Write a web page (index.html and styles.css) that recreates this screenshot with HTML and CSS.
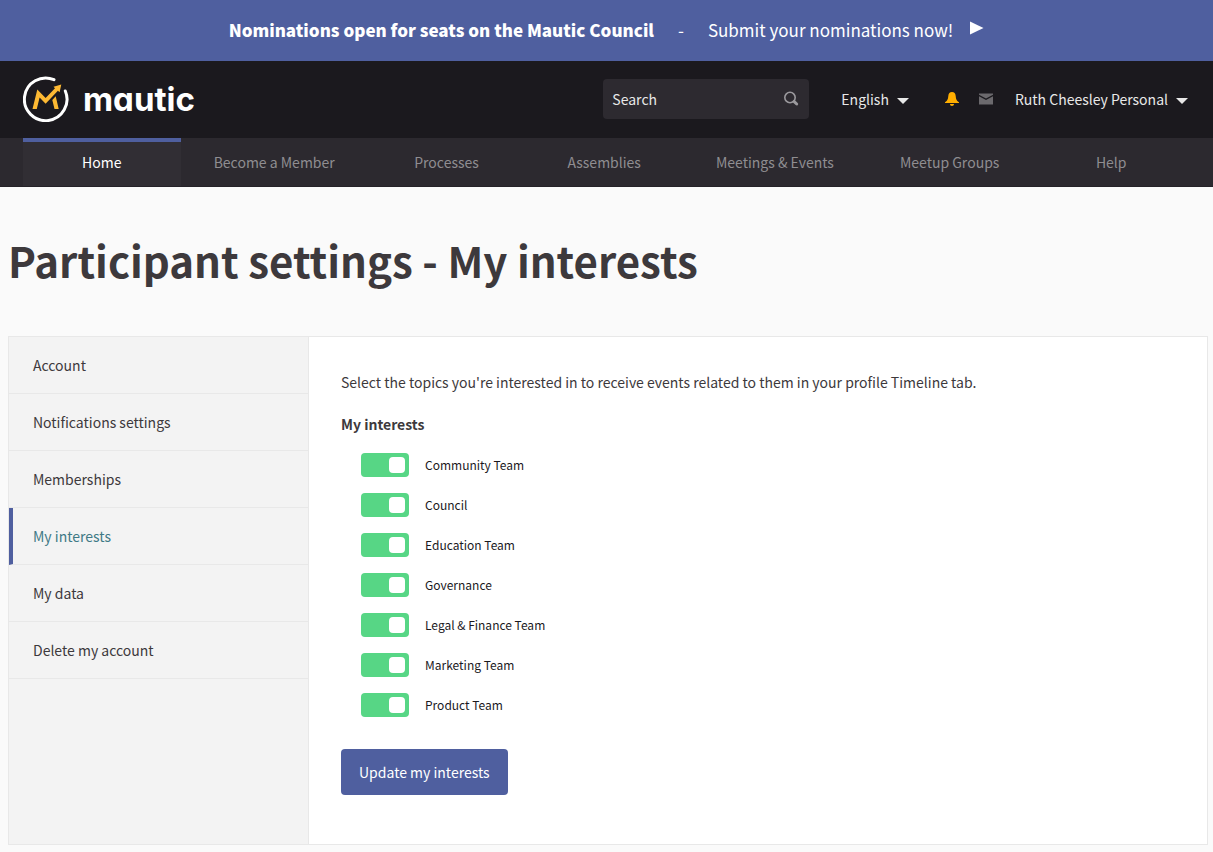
FILE: index.html
```html
<!DOCTYPE html>
<html lang="en">
<head>
<meta charset="utf-8">
<meta name="viewport" content="width=device-width, initial-scale=1">
<title>Participant settings - My interests</title>
<link rel="stylesheet" href="styles.css">
</head>
<body>
<a class="announcement" href="#">
  <strong>Nominations open for seats on the Mautic Council</strong>
  <span class="announcement-dash">-</span>
  <span>Submit your nominations now!</span>
  <svg class="announcement-arrow" viewBox="0 0 14 14" width="14" height="14" aria-hidden="true"><path d="M0 .5 13.500 7 0 13.500z"/></svg>
</a>
<header class="topbar">
  <a class="logo" href="#" aria-label="Mautic home">
    <svg viewBox="0 -0.5 46 46" width="46" height="46" aria-hidden="true">
      <path d="M31 3.200A21.300 21.300 0 1 0 42.300 14.500" fill="none" stroke="#fff" stroke-width="3" stroke-linecap="round"/>
      <path fill="#fdb933" d="M9.500 32.500 14.300 13l8.300 8.500 9.400-9.800-1.500-1.500L38.300 8l-1.700 7.800-1.700-1.500-12.300 13-6-6.200-2.800 11.400zM29.300 23.400l3.400-3.600 3 12.700h-4.200z"/>
    </svg>
    <span class="wordmark">mautic</span>
  </a>
  <form class="search" role="search">
    <input class="search-input" type="text" placeholder="Search" aria-label="Search">
    <button class="search-button" type="button" aria-label="Submit search">
      <svg viewBox="0 0 16 16" width="16" height="16" aria-hidden="true"><circle cx="7" cy="6.500" r="5.200" fill="none" stroke="currentColor" stroke-width="1.600"/><path d="m11.200 10.700 2.500 2.300" stroke="currentColor" stroke-width="3" stroke-linecap="round"/></svg>
    </button>
  </form>
  <button class="menu-button language" type="button">English <span class="caret"></span></button>
  <a class="icon-link bell" href="#" aria-label="Notifications">
    <svg viewBox="0 0 14 14" width="14" height="14" aria-hidden="true"><path fill="currentColor" d="M7 0C4.700 0 3.500 1.600 3.300 4 3 7.800 2 8.900 0 10.300v.7h14v-.7C12 8.900 11 7.800 10.700 4 10.500 1.600 9.300 0 7 0zM5 12h4c0 1-.8 2-2 2s-2-1-2-2z"/></svg>
  </a>
  <a class="icon-link mail" href="#" aria-label="Conversations">
    <svg viewBox="0 0 14 12" width="14" height="12" aria-hidden="true"><path fill="currentColor" d="M0 .5h14v1.300L7 5.600 0 1.800zM0 3.200l7 3.800 7-3.800v8.300H0z"/></svg>
  </a>
  <button class="menu-button" type="button">Ruth Cheesley Personal <span class="caret"></span></button>
</header>
<nav class="mainnav" aria-label="Main">
  <a class="mainnav-link active" href="#" aria-current="true">Home</a>
  <a class="mainnav-link" href="#">Become a Member</a>
  <a class="mainnav-link" href="#">Processes</a>
  <a class="mainnav-link" href="#">Assemblies</a>
  <a class="mainnav-link" href="#">Meetings &amp; Events</a>
  <a class="mainnav-link" href="#">Meetup Groups</a>
  <a class="mainnav-link" href="#">Help</a>
</nav>
<main class="page">
  <h1 class="title">Participant settings - My interests</h1>
  <div class="panel">
    <nav class="sidebar" aria-label="Settings">
      <a class="sidebar-link" href="#">Account</a>
      <a class="sidebar-link" href="#">Notifications settings</a>
      <a class="sidebar-link" href="#">Memberships</a>
      <a class="sidebar-link current" href="#" aria-current="page">My interests</a>
      <a class="sidebar-link" href="#">My data</a>
      <a class="sidebar-link" href="#">Delete my account</a>
    </nav>
    <form class="content">
      <p class="intro">Select the topics you're interested in to receive events related to them in your profile Timeline tab.</p>
      <fieldset class="interests">
        <legend class="legend">My interests</legend>
        <label class="option"><input class="switch" type="checkbox" checked>Community Team</label>
        <label class="option"><input class="switch" type="checkbox" checked>Council</label>
        <label class="option"><input class="switch" type="checkbox" checked>Education Team</label>
        <label class="option"><input class="switch" type="checkbox" checked>Governance</label>
        <label class="option"><input class="switch" type="checkbox" checked>Legal &amp; Finance Team</label>
        <label class="option"><input class="switch" type="checkbox" checked>Marketing Team</label>
        <label class="option"><input class="switch" type="checkbox" checked>Product Team</label>
      </fieldset>
      <button class="submit" type="button">Update my interests</button>
    </form>
  </div>
</main>
</body>
</html>
```

FILE: styles.css
```css
* { box-sizing: border-box; }

body {
  margin: 0;
  background: #fafafa;
  color: #3d393c;
  font: 14px/24px "Noto Sans CJK SC", "Noto Sans", sans-serif;
}

a { color: inherit; text-decoration: none; }
button, input { font: inherit; }

.announcement {
  display: flex;
  justify-content: center;
  gap: 24px;
  padding: 16px 0 17px;
  background: #4f5f9f;
  color: #fff;
  font-size: 17px;
  line-height: 28px;
}
.announcement strong { font-weight: 900; }
.announcement-arrow { margin: 5px 0 0 -7px; fill: #fff; }

.topbar {
  display: flex;
  align-items: center;
  padding: 15px 25px 16px 23px;
  background: #1b191e;
  color: #e8e8e8;
}
.logo { display: flex; align-items: center; gap: 14px; margin-right: auto; color: #fff; }
.wordmark {
  font: 700 33px/46px Inter, Lato, sans-serif;
  font-feature-settings: "cv11";
}

.search { display: flex; width: 206px; height: 40px; margin-right: 32px; border-radius: 4px; background: #2d2a30; }
.search-input { flex: 1; min-width: 0; padding: 0 9px; border: 0; outline: 0; background: none; color: #e8e8e8; }
.search-input::placeholder { color: #e8e8e8; opacity: 1; }
.search-button { padding: 0 10px; border: 0; background: none; color: #9b999d; }
.search-button svg { display: block; }

.menu-button { display: flex; align-items: center; gap: 8px; padding: 0; border: 0; background: none; color: inherit; white-space: nowrap; }
.caret { margin-top: 3px; border: 6px solid transparent; border-top-color: #e8e8e8; border-bottom: 0; }
.language { margin-right: 36px; }
.icon-link svg { display: block; }
.bell { margin-right: 20px; color: #ffae00; }
.mail { margin-right: 22px; color: #6b696d; }

.mainnav {
  display: flex;
  padding: 0 23px;
  border-bottom: 1px solid #252228;
  background: #2c292f;
  color: #8f8d91;
}
.mainnav-link {
  flex: 1 1 0;
  padding: 8px 33px 12px;
  border-top: 4px solid transparent;
  text-align: center;
  white-space: nowrap;
}
.mainnav-link.active { border-top-color: #4f5f9f; background: #312e34; color: #fff; }

.page { padding: 39px 5px 7px 8px; }
.title { margin: 0; font-size: 42px; line-height: 68px; font-weight: 700; }

.panel {
  display: grid;
  grid-template-columns: 300px 1fr;
  margin-top: 42px;
  border: 1px solid #e8e8e8;
  background: #fff;
}
.sidebar { border-right: 1px solid #e8e8e8; background: #f3f3f3; }
.sidebar-link { display: block; padding: 16px 24px; border-bottom: 1px solid #e8e8e8; }
.sidebar-link.current { padding-left: 20px; border-left: 4px solid #4f5f9f; color: #3f7a86; }

.content { padding: 33px 32px 49px; }
.intro { margin: 0 0 18px; }
.interests { margin: 0; padding: 0 0 0 20px; border: 0; }
.legend { margin: 0 0 17px -20px; padding: 0; font-weight: 700; }
.option { display: flex; align-items: center; gap: 16px; width: max-content; margin-bottom: 16px; color: #1b191e; font-size: 12px; line-height: 24px; }
.switch {
  appearance: none;
  width: 48px;
  height: 24px;
  margin: 0;
  padding: 4px;
  border-radius: 4px;
  background: #57d685;
}
.switch::before { content: ""; display: block; width: 16px; height: 16px; border-radius: 4px; background: #fff; }
.switch:checked::before { margin-left: auto; }
.submit { margin-top: 16px; padding: 11px 18px; border: 0; border-radius: 4px; background: #4f5f9f; color: #fff; }
```
